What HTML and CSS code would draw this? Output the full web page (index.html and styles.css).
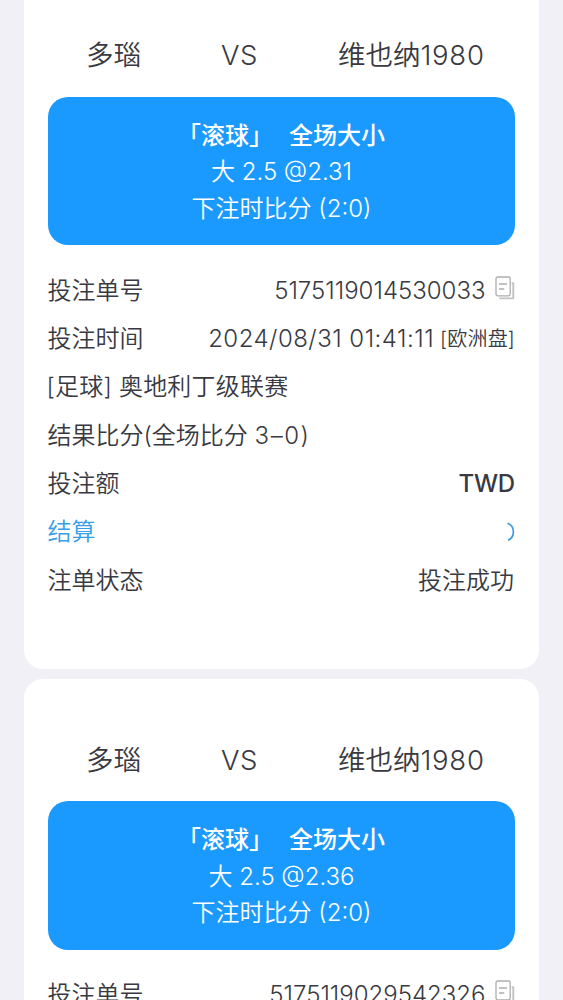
FILE: index.html
```
<!DOCTYPE html>
<html lang="zh-CN">
<head>
<meta charset="UTF-8">
<title>投注记录</title>
<link rel="stylesheet" href="styles.css">
</head>
<body>
<svg class="defs" width="0" height="0">
  <symbol id="copy" viewBox="0 0 20 25">
    <path d="M16.700 7.200h1.600v15.200H5.200v-1" fill="none" stroke="#c3c3c5" stroke-width="1.900" stroke-linejoin="round"/>
    <rect x="1" y="1" width="14.200" height="18.900" rx="1.800" fill="#fff" stroke="#adadb0" stroke-width="1.300"/>
    <path d="M4 8h8M4 13h5.300" fill="none" stroke="#adadb0" stroke-width="1.300"/>
  </symbol>
</svg>
<main class="list">
  <section class="card">
    <header class="teams"><span class="home">多瑙</span><span class="vs">VS</span><span class="away">维也纳<span class="year">1980</span></span></header>
    <div class="bet">
      <div class="market"><span>「滚球」</span><span>全场大小</span></div>
      <div class="pick">大 2.5 @2.31</div>
      <div class="score">下注时比分 (2:0)</div>
    </div>
    <div class="rows">
      <div class="row"><span>投注单号</span><span class="order"><span class="number">5175119014530033</span><svg class="copy"><use href="#copy"/></svg></span></div>
      <div class="row"><span>投注时间</span><span class="when"><span class="time">2024/08/31 01:41:11</span><span class="odds">[欧洲盘]</span></span></div>
      <div class="row"><span class="league">[足球] 奥地利丁级联赛</span></div>
      <div class="row"><span class="result">结果比分(全场比分 <span class="final">3–0)</span></span></div>
      <div class="row"><span>投注额</span><span class="currency">TWD</span></div>
      <div class="row settle"><span>结算</span><svg class="arc" viewBox="0 0 9 20"><path d="M1.500 1.200C9 3.800 9.500 15 2 18.300" fill="none" stroke="#3d9be0" stroke-width="1.700"/></svg></div>
      <div class="row"><span>注单状态</span><span class="status">投注成功</span></div>
    </div>
  </section>
  <section class="card">
    <header class="teams"><span class="home">多瑙</span><span class="vs">VS</span><span class="away">维也纳<span class="year">1980</span></span></header>
    <div class="bet">
      <div class="market"><span>「滚球」</span><span>全场大小</span></div>
      <div class="pick">大 2.5 @2.36</div>
      <div class="score">下注时比分 (2:0)</div>
    </div>
    <div class="rows">
      <div class="row"><span>投注单号</span><span class="order"><span class="number">5175119029542326</span><svg class="copy"><use href="#copy"/></svg></span></div>
    </div>
  </section>
</main>
</body>
</html>
```
FILE: styles.css
```
* { box-sizing: border-box; }
html, body { height: 100%; }
body {
  margin: 0;
  overflow: hidden;
  background: #f0f0f6;
  color: #393941;
  font: 350 24px/36px Inter, "Noto Sans CJK SC", sans-serif;
  white-space: nowrap;
}
.defs { display: block; }
.list {
  display: flex;
  flex-direction: column;
  gap: 10.200px;
  margin-top: -26px;
  padding: 0 24px;
}
.card {
  flex: none;
  height: 694.500px;
  border-radius: 19px;
  background: #fff;
  padding: 61px 24px 0;
}
.teams {
  display: grid;
  grid-template-columns: 135px 117px 1fr;
  height: 61.500px;
  padding-left: 38px;
  font-size: 27.500px;
  line-height: 40px;
}
.vs { letter-spacing: .6px; }
.year { letter-spacing: .75px; }
.bet {
  height: 148.500px;
  padding-top: 21px;
  border-radius: 20px;
  background: #1a9aff;
  color: #fff;
  text-align: center;
}
.bet > div { height: 36.500px; }
.market {
  display: flex;
  justify-content: center;
  gap: 16px;
  margin-left: -1px;
  font-weight: 500;
}
.rows { padding-top: 21.400px; }
.row {
  display: flex;
  align-items: center;
  justify-content: space-between;
  height: 48.350px;
  margin-left: -.5px;
}
.order, .when { display: flex; align-items: center; }
.copy { width: 20px; height: 25px; margin: -5px 0 0 9.500px; }
.time { margin-right: 6px; letter-spacing: .48px; }
.odds { padding-top: 1px; font-size: 20px; letter-spacing: .2px; }
.final { letter-spacing: 1.500px; }
.league { margin-left: -1px; letter-spacing: .2px; }
.currency { font-weight: 500; letter-spacing: -.2px; }
.status { margin-right: 1px; }
.settle { color: #389fe6; }
.arc { width: 9px; height: 20px; }
```
